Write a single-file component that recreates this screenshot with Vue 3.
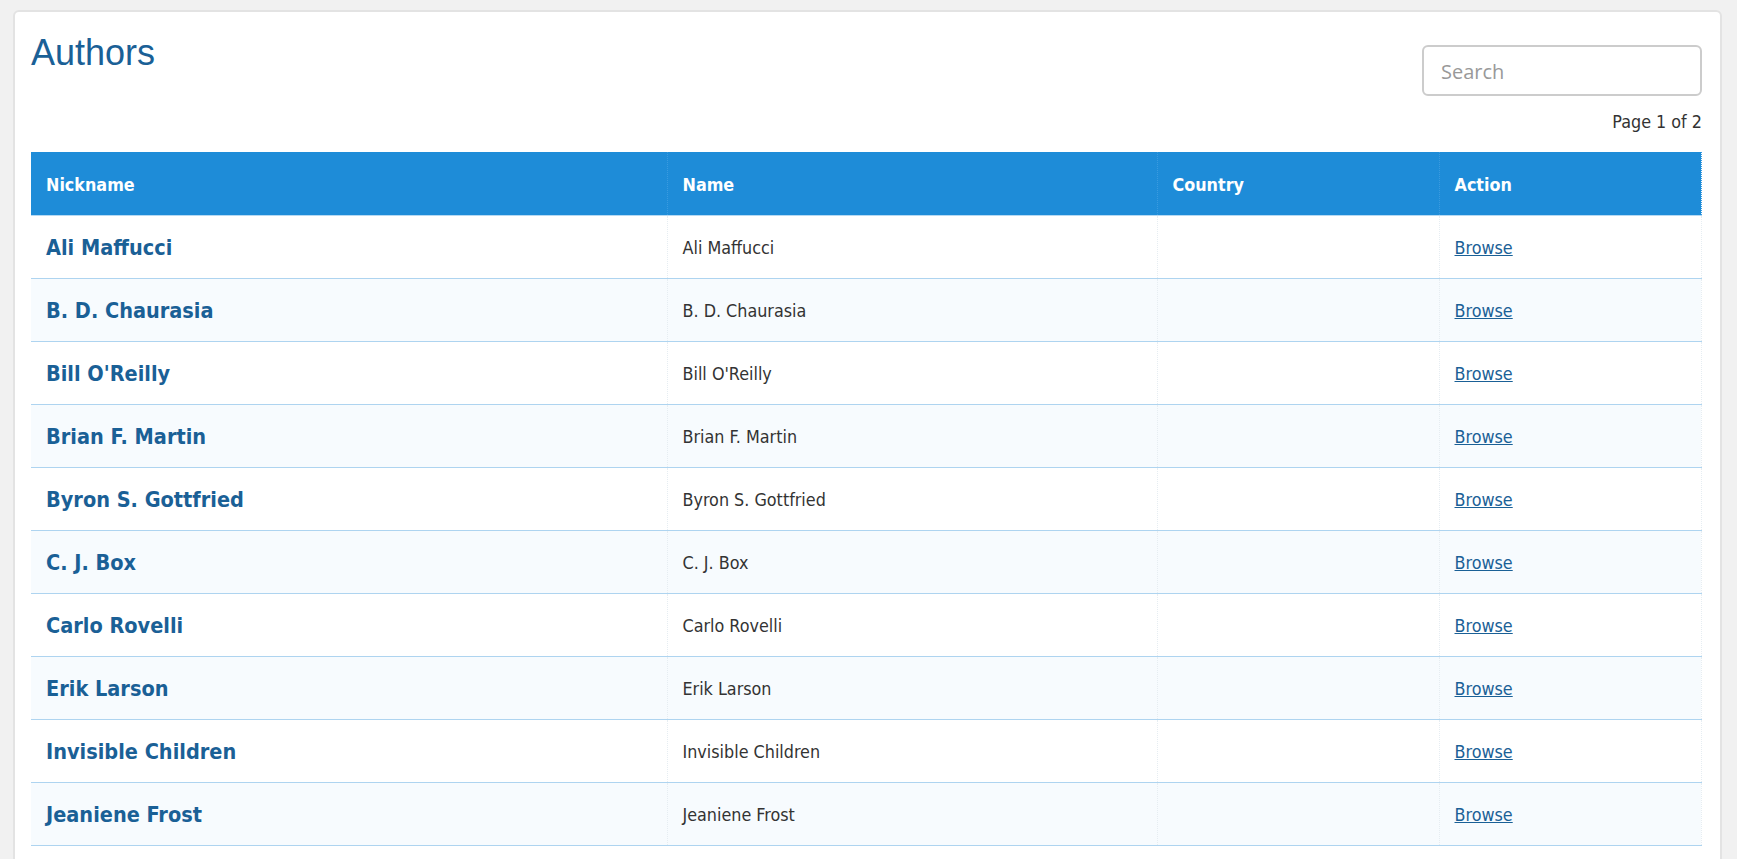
<script setup>
const authors = [
  'Ali Maffucci',
  'B. D. Chaurasia',
  "Bill O'Reilly",
  'Brian F. Martin',
  'Byron S. Gottfried',
  'C. J. Box',
  'Carlo Rovelli',
  'Erik Larson',
  'Invisible Children',
  'Jeaniene Frost'
]
</script>

<template>
  <div class="page">
    <div class="card">
      <div class="top">
        <h1 class="title">Authors</h1>
        <div class="tools">
          <input class="search" type="text" placeholder="Search" />
          <div class="pageinfo">Page 1 of 2</div>
        </div>
      </div>

      <table class="list">
        <colgroup>
          <col class="c1" />
          <col class="c2" />
          <col class="c3" />
          <col class="c4" />
        </colgroup>
        <thead>
          <tr>
            <th>Nickname</th>
            <th>Name</th>
            <th>Country</th>
            <th>Action</th>
          </tr>
        </thead>
        <tbody>
          <tr v-for="a in authors" :key="a">
            <td class="nick">{{ a }}</td>
            <td>{{ a }}</td>
            <td></td>
            <td><a href="#" class="browse">Browse</a></td>
          </tr>
        </tbody>
      </table>
    </div>
  </div>
</template>

<style>
html, body {
  height: 100%;
  overflow: hidden;
  background: #f1f1f1;
}
</style>

<style scoped>
.page {
  padding: 10px 15px 0 13px;
  font-family: "DejaVu Sans Condensed", "DejaVu Sans", sans-serif;
  font-size: 17.8px;
  color: #333;
}

.card {
  background: #fff;
  border: 2px solid #e3e3e3;
  border-radius: 6px;
  padding: 0 18px 40px 16px;
  min-height: 900px;
}

.top {
  display: flex;
  justify-content: space-between;
  align-items: flex-start;
  height: 140px;
}

.title {
  margin: 21px 0 0;
  font-family: "Liberation Sans", Arial, sans-serif;
  font-size: 36px;
  font-weight: 400;
  line-height: 40px;
  color: #1a6096;
}

.tools {
  padding-top: 33px;
  text-align: right;
}

.search {
  display: block;
  box-sizing: border-box;
  width: 280px;
  height: 51px;
  padding: 2px 17px 0;
  border: 2px solid #ccc;
  border-radius: 6px;
  font-family: "Open Sans", sans-serif;
  font-size: 20px;
  outline: none;
}

.search::placeholder {
  color: #999;
}

.pageinfo {
  margin-top: 16px;
  line-height: 20px;
}

.list {
  width: 1670px;
  table-layout: fixed;
  border-collapse: collapse;
}

.c1 { width: 636px; }
.c2 { width: 490px; }
.c3 { width: 282px; }
.c4 { width: 262px; }

th {
  height: 63px;
  box-sizing: border-box;
  padding: 2px 15px 0;
  background: #1e8cd8;
  color: #fff;
  font-weight: 700;
  text-align: left;
  border-right: 1px dotted #3a9be0;
  border-bottom: 1px solid #b5d9f3;
}

td {
  height: 63px;
  box-sizing: border-box;
  padding: 1px 15px 0;
  border-right: 1px dotted #e6edf2;
  border-bottom: 1px solid #aed4f0;
}

tbody tr:nth-child(even) td {
  background: #f7fbfe;
}

.nick {
  font-size: 21.5px;
  font-weight: 700;
  color: #1a6096;
}

.browse {
  color: #1a6096;
  text-decoration: underline;
}
</style>
